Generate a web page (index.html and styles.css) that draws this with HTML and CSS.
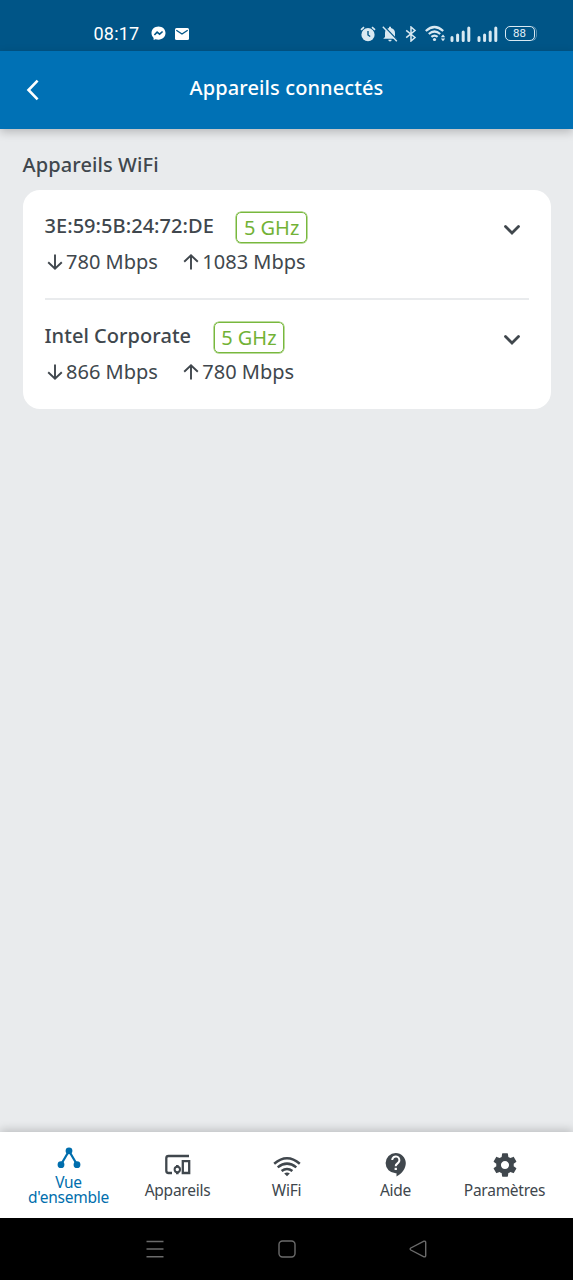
FILE: index.html
```html
<!DOCTYPE html>
<html lang="fr">
<head>
<meta charset="utf-8">
<title>Appareils connectés</title>
<link rel="stylesheet" href="styles.css">
</head>
<body>
<div class="statusbar">
  <span class="clock">08:17</span>
  <svg class="messenger" width="15" height="15" viewBox="0 0 15 15"><path fill="#fff" d="M7.5.5C3.5.5.5 3.3.5 7.1c0 2 .8 3.6 2.1 4.8v2.2l2-.9c.9.3 1.8.5 2.9.5 4 0 7-2.8 7-6.6S11.500.5 7.500.5z"/><path d="M3.400 9l2.700-2.800L8.600 8.200l3-2.700" fill="none" stroke="#005587" stroke-width="1.600"/></svg>
  <svg class="mail" width="14" height="12" viewBox="0 0 14 12"><rect width="14" height="12" rx="1.500" fill="#fff"/><path d="M1.300 2.300L7 6l5.700-3.700" fill="none" stroke="#005587" stroke-width="1.300"/></svg>
  <div class="indicators">
    <svg class="alarm" width="16" height="16" viewBox="0 0 16 16"><circle cx="8" cy="8.700" r="6.600" fill="#d9e9f2"/><path d="M1 3.800L4 1.200M15 3.800L12 1.200" stroke="#d9e9f2" stroke-width="1.700"/><path d="M8 5v4l2.200 1.500" fill="none" stroke="#005587" stroke-width="1.400"/></svg>
    <svg class="bell" width="16" height="16" viewBox="0 0 16 16"><path fill="#d9e9f2" d="M7 2V.8h2V2c2.600.5 4 2.400 4 5v4l1.800 1.800H1.200L3 11V7c0-2.600 1.400-4.500 4-5zM6.300 13.700h3.400a1.700 1.700 0 0 1-3.400 0z"/><path d="M2.200.5L15.500 14.200" stroke="#005587" stroke-width="1.500"/><path d="M.8.800L14.800 15.200" stroke="#d9e9f2" stroke-width="1.400"/></svg>
    <svg class="bluetooth" width="12" height="16" viewBox="0 0 12 16"><path d="M1.200 4.300L10 11.500 6 15V1l4 3.500-8.800 7.200" fill="none" stroke="#d9e9f2" stroke-width="1.500"/></svg>
    <svg class="wifi-status" width="21" height="17" viewBox="0 0 21 17"><path d="M.8 6Q9.500-2 18.200 6M3.800 9Q9.500 4 15.200 9M6.400 11.900Q9.500 9.300 12.600 11.900" fill="none" stroke="#d9e9f2" stroke-width="2.200"/><circle cx="9.500" cy="14.500" r="1.600" fill="#d9e9f2"/><path fill="#d9e9f2" d="M18 9.500l2.200 2.700h-4.400zM18 16.200l2.200-2.700h-4.400z"/></svg>
    <svg class="signal" width="21" height="16" viewBox="0 0 21 16"><path d="M2 11.500v3M7.600 9v5.500M13.200 6v8.500M18.800 2v12.500" stroke="#d9e9f2" stroke-width="3" stroke-linecap="round"/></svg>
    <svg class="signal second" width="21" height="16" viewBox="0 0 21 16"><path d="M2 11.500v3M7.600 9v5.500M13.200 6v8.500M18.800 2v12.500" stroke="#d9e9f2" stroke-width="3" stroke-linecap="round"/></svg>
    <span class="battery">88</span>
  </div>
</div>

<header class="header">
  <svg class="back" width="16" height="22" viewBox="0 0 16 22"><path d="M12.600 1.700L3.500 11l9.100 9.300" fill="none" stroke="#fff" stroke-width="2.600"/></svg>
  <h1>Appareils connectés</h1>
</header>

<main class="content">
  <h2>Appareils WiFi</h2>
  <section class="card">
    <article class="device">
      <div class="info">
        <div class="name"><span class="label">3E:59:5B:24:72:DE</span><span class="band">5 GHz</span></div>
        <div class="speeds">
          <span class="speed"><svg width="16" height="16" viewBox="0 0 16 16"><path d="M8 .5v14M1.200 8.200L8 14.700l6.800-6.500"/></svg>780 Mbps</span>
          <span class="speed"><svg width="16" height="16" viewBox="0 0 16 16"><path d="M8 15.500v-14M1.200 7.800L8 1.300l6.800 6.500"/></svg>1083 Mbps</span>
        </div>
      </div>
      <svg class="chevron" width="18" height="12" viewBox="0 0 18 12"><path d="M2.500 2.500L9 9l6.500-6.500"/></svg>
    </article>
    <article class="device">
      <div class="info">
        <div class="name"><span class="label">Intel Corporate</span><span class="band">5 GHz</span></div>
        <div class="speeds">
          <span class="speed"><svg width="16" height="16" viewBox="0 0 16 16"><path d="M8 .5v14M1.200 8.200L8 14.700l6.800-6.500"/></svg>866 Mbps</span>
          <span class="speed"><svg width="16" height="16" viewBox="0 0 16 16"><path d="M8 15.500v-14M1.200 7.800L8 1.300l6.800 6.500"/></svg>780 Mbps</span>
        </div>
      </div>
      <svg class="chevron" width="18" height="12" viewBox="0 0 18 12"><path d="M2.500 2.500L9 9l6.500-6.500"/></svg>
    </article>
  </section>
</main>

<nav class="tabs">
  <a class="tab active"><svg width="28" height="28" viewBox="0 0 28 28"><path d="M6 20.500L14 7l8 13.500" fill="none" stroke="currentColor" stroke-width="2.200"/><g fill="currentColor"><circle cx="14" cy="6.800" r="3.400"/><circle cx="6" cy="20.700" r="3.400"/><circle cx="22" cy="20.700" r="3.400"/></g></svg><span>Vue<br>d'ensemble</span></a>
  <a class="tab"><svg width="28" height="28" viewBox="0 0 28 28"><path d="M25 5H4.500Q2.300 5 2.300 7.200v12.600Q2.300 22 4.500 22H8M18.800 10.200h6.400v11.800h-6.400z" fill="none" stroke="currentColor" stroke-width="2.300"/><circle cx="13.300" cy="18.500" r="2.700" fill="none" stroke="currentColor" stroke-width="2"/><path d="M12 14h2.600v2H12zM12 21.200h2.600v2H12z" fill="currentColor"/></svg><span>Appareils</span></a>
  <a class="tab"><svg width="28" height="28" viewBox="0 0 28 28"><path d="M1.200 12.700Q14 1.700 26.800 12.700M4.700 16.400Q14 8.800 23.300 16.400M8.600 20.100Q14 15.800 19.400 20.100" fill="none" stroke="currentColor" stroke-width="2.500"/><path d="M11.200 22.500q2.800-2 5.600 0L14 25.300z" fill="currentColor"/></svg><span>WiFi</span></a>
  <a class="tab"><svg width="28" height="28" viewBox="0 0 28 28"><path d="M13.700 2a10.100 10.100 0 1 0 0 20.200h.8v3.400c5.500-2.700 9.300-8 9.300-13.500C23.800 6.500 19.300 2 13.700 2z" fill="currentColor"/><path d="M10.200 9.100a3.600 3.600 0 1 1 6.500 2.100c-1.300 1.700-3 1.900-3 4" fill="none" stroke="#fff" stroke-width="2"/><path d="M12.600 16.800h2.300V19h-2.300z" fill="#fff"/></svg><span>Aide</span></a>
  <a class="tab"><svg width="28" height="28" viewBox="0 0 24 24"><path fill="currentColor" d="M19.430 12.980c.04-.32.07-.64.07-.98s-.03-.66-.07-.98l2.110-1.650c.19-.15.240-.42.120-.64l-2-3.460c-.12-.22-.39-.3-.61-.22l-2.490 1c-.52-.4-1.080-.73-1.690-.98l-.38-2.650C14.460 2.180 14.250 2 14 2h-4c-.25 0-.46.18-.49.42l-.38 2.650c-.61.25-1.170.59-1.690.98l-2.490-1c-.23-.09-.49 0-.61.22l-2 3.460c-.13.22-.07.49.12.64l2.110 1.650c-.04.32-.07.65-.07.98s.03.66.07.98l-2.110 1.650c-.19.15-.24.42-.12.640l2 3.460c.12.220.390.300.610.220l2.490-1c.52.400 1.080.730 1.690.980l.38 2.650c.03.240.240.420.490.420h4c.25 0 .46-.18.49-.42l.38-2.650c.61-.25 1.170-.59 1.690-.98l2.490 1c.23.090.490 0 .610-.22l2-3.460c.12-.22.070-.49-.12-.64l-2.110-1.650zM12 15.500c-1.930 0-3.500-1.570-3.500-3.500s1.570-3.500 3.500-3.500 3.500 1.570 3.500 3.500-1.570 3.500-3.500 3.500z"/></svg><span>Paramètres</span></a>
</nav>

<div class="systembar">
  <svg width="18" height="18" viewBox="0 0 18 18"><path d="M.5 1.500h17M.5 9h17M.5 16.700h17"/></svg>
  <svg width="18" height="18" viewBox="0 0 18 18"><rect x="1" y="1" width="16" height="16" rx="3.500"/></svg>
  <svg width="18" height="18" viewBox="0 0 18 18"><path d="M15 1.200L1.800 8Q.5 9 1.800 10L15 16.800Q16.700 17.200 16.700 15.500V2.500Q16.700.8 15 1.200z"/></svg>
</div>
</body>
</html>
```
FILE: styles.css
```css
* { box-sizing: border-box; }

body {
  margin: 0;
  height: 1280px;
  display: flex;
  flex-direction: column;
  overflow: hidden;
  background: #e9ebed;
  color: #40474d;
  font-family: "Noto Sans", "Open Sans", sans-serif;
}

svg { display: block; flex: none; }

.statusbar {
  height: 51px;
  padding: 16px 38.500px 0 93.500px;
  display: flex;
  align-items: center;
  background: #005587;
  color: #fff;
}
.clock { font: 400 18px/24px Roboto, sans-serif; letter-spacing: .2px; }
.messenger { margin-left: 11.500px; }
.mail { margin-left: 9px; }
.indicators { margin-left: auto; display: flex; align-items: center; }
.bell { margin-left: 6px; }
.bluetooth { margin-left: 7px; }
.wifi-status { margin-left: 8px; }
.signal { margin-left: 4px; }
.signal.second { margin-left: 5.500px; }
.battery {
  margin-left: 7px;
  width: 30px;
  height: 15px;
  border: 1.500px solid #d9e9f2;
  border-radius: 5px;
  box-shadow: 2px 0 0 -1px #005587, 2px 0 0 -.5px #a8c6d8;
  color: #e4f0f7;
  font: 11.500px/13px Roboto, sans-serif;
  text-align: center;
}

.header {
  height: 78px;
  padding-top: 22px;
  display: grid;
  grid-template-columns: 60px 1fr 60px;
  align-items: start;
  position: relative;
  z-index: 1;
  background: #0071b5;
  color: #fff;
  box-shadow: 0 3px 9px rgba(0, 0, 0, .22);
}
.back { margin: 6px 0 0 25px; }
h1 { margin: 0; font-size: 20px; line-height: 29px; font-weight: 500; text-align: center; letter-spacing: .1px; }

.content { flex: 1; padding: 21px 22.500px 0; }
h2 { margin: 0 0 11px; font-size: 20px; line-height: 29px; font-weight: 500; letter-spacing: .1px; }

.card {
  height: 219px;
  padding: 0 22px;
  background: #fff;
  border-radius: 17px;
}
.device { height: 110px; padding-top: 22px; display: flex; justify-content: space-between; }
.device:first-child { border-bottom: 2px solid #e9ebed; }
.name { height: 31px; display: flex; gap: 22.500px; font-size: 20px; line-height: 28px; font-weight: 500; }
.label { letter-spacing: .04px; }
.band {
  width: 70.500px;
  height: 31px;
  border: 1.500px solid #78b83d;
  border-radius: 5px;
  box-shadow: 0 0 0 .5px #78b83d;
  color: #72b236;
  font-weight: 400;
  line-height: 29px;
  text-align: center;
}
.speeds { margin: 4px 0 0 2.500px; display: flex; gap: 25.500px; font-size: 20px; line-height: 29px; }
.speed { display: flex; align-items: center; gap: 3px; }
.speed svg { fill: none; stroke: currentColor; stroke-width: 1.900; }
.chevron { margin: 12px 8px 0 0; fill: none; stroke: currentColor; stroke-width: 2.800; stroke-linecap: round; }

.tabs {
  height: 86px;
  padding: 0 14px;
  display: grid;
  grid-template-columns: repeat(5, 1fr);
  background: #fff;
  box-shadow: 0 -2px 9px rgba(0, 0, 0, .2);
}
.tab {
  padding-top: 19px;
  display: flex;
  flex-direction: column;
  align-items: center;
  font-size: 15.500px;
  line-height: 15px;
  letter-spacing: -.25px;
  text-align: center;
}
.tab span { margin-top: 4px; }
.tab.active { padding-top: 12px; color: #006ead; }
.tab.active span { margin-top: 3px; }

.systembar {
  height: 62px;
  padding: 0 146px;
  display: flex;
  align-items: center;
  justify-content: space-between;
  background: #000;
}
.systembar svg { fill: none; stroke: #6b6b6b; stroke-width: 1.400; }
```
